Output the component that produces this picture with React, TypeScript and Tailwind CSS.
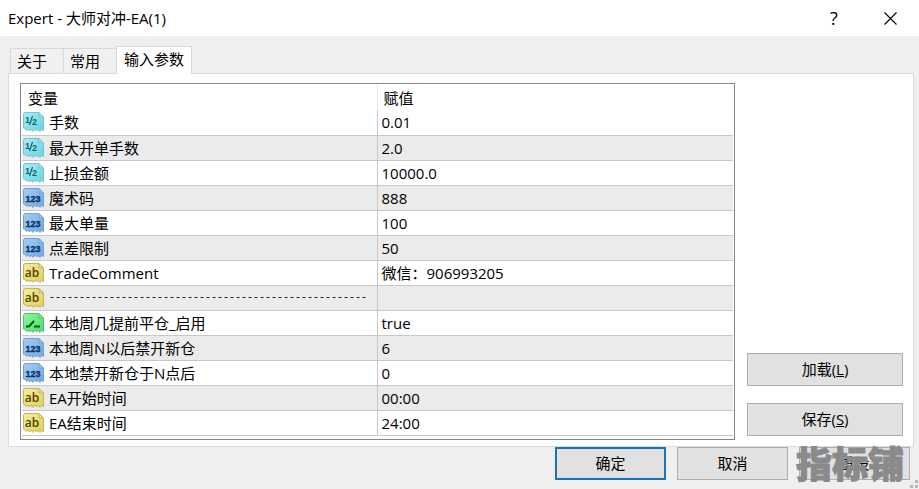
import React, { useState } from 'react';
import { clsx } from 'clsx';

type ParamType = 'double' | 'int' | 'string' | 'bool';

interface Param {
  type: ParamType;
  name: string;
  value: string;
}

const PARAMS: Param[] = [
  { type: 'double', name: '手数', value: '0.01' },
  { type: 'double', name: '最大开单手数', value: '2.0' },
  { type: 'double', name: '止损金额', value: '10000.0' },
  { type: 'int', name: '魔术码', value: '888' },
  { type: 'int', name: '最大单量', value: '100' },
  { type: 'int', name: '点差限制', value: '50' },
  { type: 'string', name: 'TradeComment', value: '微信：906993205' },
  { type: 'string', name: '-----------------------------------------------------', value: '' },
  { type: 'bool', name: '本地周几提前平仓_启用', value: 'true' },
  { type: 'int', name: '本地周N以后禁开新仓', value: '6' },
  { type: 'int', name: '本地禁开新仓于N点后', value: '0' },
  { type: 'string', name: 'EA开始时间', value: '00:00' },
  { type: 'string', name: 'EA结束时间', value: '24:00' },
];

const TABS = ['关于', '常用', '输入参数'];

const ICON_COLORS = {
  double: { light: '#a5f0f4', dark: '#6ad2de', edge: '#74c3cd', ink: '#17616e' },
  int: { light: '#a3cff8', dark: '#6ea6e4', edge: '#769fcc', ink: '#0c2f5e' },
  string: { light: '#f8ef9c', dark: '#dfcd5c', edge: '#c2b25c', ink: '#4f4300' },
  bool: { light: '#8cf79b', dark: '#4bdc6c', edge: '#55be6e', ink: '#0b5420' },
};

const TypeIcon = ({ type }: { type: ParamType }) => {
  const c = ICON_COLORS[type];
  const id = `fill-${type}`;

  return (
    <svg width="21" height="20" viewBox="0 0 21 20" className="shrink-0" aria-hidden="true">
      <defs>
        <linearGradient id={id} x1="0" y1="0" x2="1" y2="1">
          <stop offset="0" stopColor={c.light} />
          <stop offset="1" stopColor={c.dark} />
        </linearGradient>
      </defs>
      {/* Sheet with a torn lower edge */}
      <path
        d="M2.5.5H16L20.5 5V18.5L18.5 17.5L17 19.5L15 17.5L13.5 19L11.5 17L10 19.5L8 17L6.5 19L5 17L3.5 18.5L2.5 16.5L.5 16V2.5Q.5.5 2.5.5Z"
        fill={`url(#${id})`}
        stroke={c.edge}
        strokeWidth="1"
      />
      <path d="M16 1V5H20Z" fill={c.light} stroke={c.edge} strokeWidth="1" />
      {type === 'double' && (
        <g fill={c.ink} fontFamily="Liberation Sans" fontWeight="bold">
          <text x="2" y="11" fontSize="9">1</text>
          <text x="9" y="13" fontSize="9">2</text>
          <path d="M6.5 13L9.5 4" stroke={c.ink} strokeWidth="1.2" />
        </g>
      )}
      {type === 'int' && (
        <text x="10" y="14" fontSize="9" textAnchor="middle" fill={c.ink} fontFamily="Liberation Sans" fontWeight="bold" stroke={c.ink} strokeWidth=".3">
          123
        </text>
      )}
      {type === 'string' && (
        <text x="9" y="14" fontSize="12" textAnchor="middle" fill={c.ink} fontFamily="Open Sans" fontWeight="600">ab</text>
      )}
      {type === 'bool' && (
        <path d="M3 13.5H6L11 8M12 12.5V13.5H17" fill="none" stroke={c.ink} strokeWidth="2" />
      )}
    </svg>
  );
};

const DialogButton = ({ primary, className, children }: { primary?: boolean; className?: string; children: React.ReactNode }) => (
  <button
    type="button"
    className={clsx(
      'h-[33px] bg-[#e1e1e1] text-center hover:bg-[#e5f1fb]',
      primary ? 'border-2 border-[#1a73b5]' : 'border border-[#adadad]',
      className
    )}
  >
    {children}
  </button>
);

export default function App() {
  const [tab, setTab] = useState(2);

  return (
    <div className="min-h-screen flex flex-col bg-[#efefef] font-['Open_Sans','Noto_Sans_CJK_SC',sans-serif] text-[15px] leading-5 text-black select-none">
      <header className="h-9 flex items-center justify-between bg-white pl-2 pr-[17px]">
        <h1>Expert - 大师对冲-EA(1)</h1>
        <div className="flex items-center gap-9">
          <button type="button" aria-label="帮助" className="w-4 text-lg leading-5">?</button>
          <button type="button" aria-label="关闭" className="w-6 flex justify-center">
            <svg width="13" height="13" viewBox="0 0 13 13" stroke="#000" strokeWidth="1.1">
              <path d="M.5.5L12.5 12.5M12.5.5L.5 12.5" />
            </svg>
          </button>
        </div>
      </header>

      <nav role="tablist" className="relative flex items-end pl-[10px] pt-[10px]">
        {TABS.map((label, i) => (
          <button
            key={label}
            type="button"
            role="tab"
            aria-selected={tab === i}
            onClick={() => setTab(i)}
            className={clsx(
              'border-l border-t border-[#d9d9d9] text-left',
              tab === i ? 'h-7 -mb-px bg-white border-r px-[7px] pb-1' : 'h-[25px] bg-[#f0f0f0] pl-[6px] pr-4'
            )}
          >
            {label}
          </button>
        ))}
      </nav>

      <main className="flex gap-3 ml-2 mr-[5px] bg-white border border-[#dcdcdc] pl-[11px] pr-[10px] pt-[9px] pb-[6px]">
        <div className="flex-1 border border-[#828790] px-px pt-px pb-[3px]">
          <table className="w-full table-fixed border-collapse">
            <thead>
              <tr className="h-[25px] text-left">
                <th className="w-[355px] font-normal py-0 pl-[6px] border-r border-[#e5e5e5]">变量</th>
                <th className="font-normal py-0 pl-[6px]">赋值</th>
              </tr>
            </thead>
            <tbody>
              {PARAMS.map((p) => (
                <tr key={p.name} className="h-[25px] border-b border-[#c8c8c8] even:bg-[#ebebeb]">
                  <td className="p-0 pl-px border-r border-[#c8c8c8]">
                    <div className="flex items-center gap-[5px] h-6">
                      <TypeIcon type={p.type} />
                      {p.name.startsWith('--') ? (
                        <span className="font-['Liberation_Mono',monospace] text-[10px]">{p.name}</span>
                      ) : (
                        <span className="whitespace-nowrap">{p.name}</span>
                      )}
                    </div>
                  </td>
                  <td className="p-0 pl-1">{p.value}</td>
                </tr>
              ))}
            </tbody>
          </table>
        </div>

        <div className="w-[156px] flex flex-col justify-end gap-[17px] pb-1">
          <DialogButton>加载(<u>L</u>)</DialogButton>
          <DialogButton>保存(<u>S</u>)</DialogButton>
        </div>
      </main>

      <footer className="flex justify-end gap-[11px] pr-[9px]">
        <DialogButton primary className="w-[111px]">确定</DialogButton>
        <DialogButton className="w-[111px]">取消</DialogButton>
        <div className="relative">
          <DialogButton className="w-[111px]">重设</DialogButton>
          {/* Watermark */}
          <span className="absolute -left-[3px] top-0 text-4xl leading-9 font-black whitespace-nowrap text-[#8a8a8a] [-webkit-text-stroke:1px_#8a8a8a] pointer-events-none">
            指标铺
          </span>
        </div>
      </footer>

      {/* Resize grip */}
      <svg width="8" height="8" viewBox="0 0 8 8" fill="#b8b8b8" className="absolute right-px bottom-px" aria-hidden="true">
        <path d="M5 0H8V3H5ZM0 5H3V8H0ZM5 5H8V8H5Z" />
      </svg>
    </div>
  );
}
